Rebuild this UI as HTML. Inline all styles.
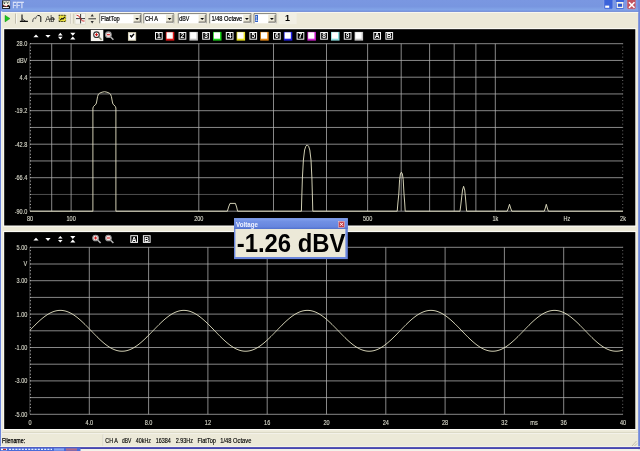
<!DOCTYPE html>
<html><head><meta charset="utf-8"><title>FFT</title>
<style>html,body{margin:0;padding:0;background:#ece9d8;overflow:hidden}svg{display:block;will-change:transform}</style></head>
<body>
<svg width="640" height="451" viewBox="0 0 640 451" font-family="Liberation Sans, sans-serif" shape-rendering="auto">
<rect x="0" y="0" width="640" height="451" fill="#ece9d8"/>
<defs><linearGradient id="tg" x1="0" y1="0" x2="0" y2="1"><stop offset="0" stop-color="#7a97e1"/><stop offset="0.55" stop-color="#7896e0"/><stop offset="0.85" stop-color="#83a6e8"/><stop offset="0.93" stop-color="#6f8fe0"/><stop offset="1" stop-color="#4f6ecc"/></linearGradient></defs>
<rect x="0" y="0" width="640" height="11.9" fill="url(#tg)"/>
<rect x="0" y="0" width="1.2" height="451" fill="#6f88dc"/>
<rect x="638.2" y="0" width="1.8" height="451" fill="#6f88dc"/>
<rect x="1.2" y="11.2" width="1" height="437" fill="#f6f5ee"/>
<rect x="2.1" y="0.4" width="8" height="8.4" fill="#0c0c0c"/>
<rect x="2.9" y="0.8" width="7" height="5.2" fill="#f2f0e4"/>
<path d="M3.6 1.4 L4.4 4 L5.2 1.6 M6.6 1.4 L7.6 3.6 L8.6 1.6" stroke="#3a4a40" stroke-width="0.8" fill="none"/>
<path d="M2.9 4.6 L4 5.6 L5.4 6.2 L6.6 6.3 L7.6 5.4 L8.4 4.8 L9.9 6 L9.9 6.6 L2.9 6.6 Z" fill="#141414"/>
<circle cx="3.6" cy="5.3" r="0.5" fill="#d02828"/><circle cx="5" cy="6" r="0.5" fill="#d02828"/><circle cx="6.5" cy="6.5" r="0.5" fill="#d02828"/><circle cx="7.6" cy="5.5" r="0.5" fill="#d02828"/>
<rect x="2.9" y="6.9" width="6" height="1.1" fill="#f4f4f0"/>
<text x="12.6" y="8" font-size="8.4" fill="#dfe6f9" text-anchor="start" font-weight="normal" textLength="11.3" lengthAdjust="spacingAndGlyphs" stroke="#dfe6f9" stroke-width="0.35">FFT</text>
<rect x="603.9" y="-1" width="9" height="10.2" rx="1.3" fill="#3b63da" stroke="#9ab0ee" stroke-width="0.6"/>
<rect x="615.4" y="-1" width="9" height="10.2" rx="1.3" fill="#3b63da" stroke="#9ab0ee" stroke-width="0.6"/>
<rect x="626.9" y="-1" width="9" height="10.2" rx="1.3" fill="#c2525f" stroke="#9ab0ee" stroke-width="0.6"/>
<rect x="605.2" y="5.6" width="4" height="2.2" fill="#fff"/>
<rect x="617.3" y="2.6" width="5.4" height="4.8" fill="#2f56cc" stroke="#f4f4ea" stroke-width="1.2"/><rect x="616.7" y="2" width="6.6" height="1.6" fill="#f4f4ea"/>
<path d="M629 2.2 L634.5 7.7 M634.5 2.2 L629 7.7" stroke="#fff" stroke-width="1.6" fill="none"/>
<rect x="1.2" y="11.9" width="637" height="0.9" fill="#fbfaf4"/>
<path d="M5 15.3 L10 18.6 L5 21.9 Z" fill="#1fc41f" stroke="#0a8a0a" stroke-width="0.4"/>
<rect x="15.3" y="13.6" width="0.7" height="10" fill="#b0ad9c"/><rect x="16" y="13.6" width="0.6" height="10" fill="#fff"/>
<path d="M22 14.4 L22 21.4 M19.9 21.4 L27.9 21.4" stroke="#111" stroke-width="1.1" fill="none"/>
<path d="M22.5 18.4 Q23 20.6 25.4 20.9" stroke="#222" stroke-width="0.9" fill="none"/>
<path d="M32.7 22 L33 19.2 L34.6 18 L35.6 18.7 L36.3 16.6 L37.8 15.4" stroke="#555" stroke-width="1" fill="none" stroke-linejoin="round"/>
<path d="M37.8 15.4 L40 15.9 L40.8 16.8 L40.8 22" stroke="#111" stroke-width="1" fill="none" stroke-linejoin="round"/>
<text x="45.2" y="21.5" font-size="8.6" fill="#111" text-anchor="start" font-weight="normal" textLength="9.2" lengthAdjust="spacingAndGlyphs" >Ab</text>
<rect x="49.2" y="18.6" width="5.6" height="0.9" fill="#000"/>
<rect x="58.8" y="14.9" width="7.2" height="7" fill="#ece23c"/>
<path d="M58.8 15.3 L66 15.3 M58.8 21.5 L66 21.5" stroke="#222" stroke-width="0.9" stroke-dasharray="1.6 0.8" fill="none"/>
<path d="M59.2 15 L59.2 22 M65.7 15 L65.7 22" stroke="#333" stroke-width="0.6" stroke-dasharray="1.4 1" fill="none"/>
<path d="M60.3 20.2 L61.8 18.4 L63 19 L64.8 16.8" stroke="#111" stroke-width="1.1" fill="none"/>
<rect x="70" y="13.6" width="0.7" height="10" fill="#b0ad9c"/><rect x="70.7" y="13.6" width="0.6" height="10" fill="#fff"/>
<rect x="73" y="13.6" width="0.7" height="10" fill="#c8c5b4"/>
<rect x="75" y="13.3" width="10.5" height="10.8" fill="#f6f5ef" stroke="#d0cdbd" stroke-width="0.5"/>
<path d="M76 18.6 L85 18.6 M80.6 14 L80.6 23.4" stroke="#222" stroke-width="0.9" fill="none"/>
<path d="M76.5 15.2 Q79 15 80.6 18.6 T84.6 21" stroke="#d02020" stroke-width="0.9" fill="none"/>
<path d="M88.4 18.8 L96 18.8" stroke="#222" stroke-width="0.9"/><path d="M92.2 14 L90.6 16.4 L93.8 16.4 Z M92.2 23.5 L90.6 21.1 L93.8 21.1 Z" fill="#333"/>
<rect x="99.4" y="13.3" width="42.099999999999994" height="10.0" fill="#fff"/>
<path d="M99.7 23.3 L99.7 13.600000000000001 L141.5 13.600000000000001" fill="none" stroke="#5a5a52" stroke-width="0.75"/>
<path d="M141.3 13.9 L141.3 23.3" fill="none" stroke="#55554e" stroke-width="0.5"/>
<rect x="133.5" y="14.700000000000001" width="7.2" height="7.8" fill="#ece9d8"/>
<path d="M133.5 22.2 L140.5 22.2 L140.5 14.700000000000001" fill="none" stroke="#4a4a44" stroke-width="0.7"/>
<path d="M134.1 21.5 L139.8 21.5 L139.8 15.3" fill="none" stroke="#9a978a" stroke-width="0.5"/>
<path d="M135.2 17.9 L139.0 17.9 L137.1 20.0 Z" fill="#000"/>
<text x="101.0" y="20.5" font-size="6.7" fill="#000" text-anchor="start" font-weight="normal" textLength="18.8" lengthAdjust="spacingAndGlyphs" stroke="#000" stroke-width="0.2">FlatTop</text>
<rect x="143.5" y="13.3" width="30.5" height="10.0" fill="#fff"/>
<path d="M143.8 23.3 L143.8 13.600000000000001 L174 13.600000000000001" fill="none" stroke="#5a5a52" stroke-width="0.75"/>
<path d="M173.8 13.9 L173.8 23.3" fill="none" stroke="#55554e" stroke-width="0.5"/>
<rect x="166" y="14.700000000000001" width="7.2" height="7.8" fill="#ece9d8"/>
<path d="M166 22.2 L173 22.2 L173 14.700000000000001" fill="none" stroke="#4a4a44" stroke-width="0.7"/>
<path d="M166.6 21.5 L172.3 21.5 L172.3 15.3" fill="none" stroke="#9a978a" stroke-width="0.5"/>
<path d="M167.7 17.9 L171.5 17.9 L169.6 20.0 Z" fill="#000"/>
<text x="145.1" y="20.5" font-size="6.7" fill="#000" text-anchor="start" font-weight="normal" textLength="12.9" lengthAdjust="spacingAndGlyphs" stroke="#000" stroke-width="0.2">CH A</text>
<rect x="178" y="13.3" width="28.599999999999994" height="10.0" fill="#fff"/>
<path d="M178.3 23.3 L178.3 13.600000000000001 L206.6 13.600000000000001" fill="none" stroke="#5a5a52" stroke-width="0.75"/>
<path d="M206.4 13.9 L206.4 23.3" fill="none" stroke="#55554e" stroke-width="0.5"/>
<rect x="198.6" y="14.700000000000001" width="7.2" height="7.8" fill="#ece9d8"/>
<path d="M198.6 22.2 L205.6 22.2 L205.6 14.700000000000001" fill="none" stroke="#4a4a44" stroke-width="0.7"/>
<path d="M199.2 21.5 L204.9 21.5 L204.9 15.3" fill="none" stroke="#9a978a" stroke-width="0.5"/>
<path d="M200.29999999999998 17.9 L204.1 17.9 L202.2 20.0 Z" fill="#000"/>
<text x="179.3" y="20.5" font-size="6.7" fill="#000" text-anchor="start" font-weight="normal" textLength="10" lengthAdjust="spacingAndGlyphs" stroke="#000" stroke-width="0.2">dBV</text>
<rect x="209.4" y="13.3" width="41.900000000000006" height="10.0" fill="#fff"/>
<path d="M209.70000000000002 23.3 L209.70000000000002 13.600000000000001 L251.3 13.600000000000001" fill="none" stroke="#5a5a52" stroke-width="0.75"/>
<path d="M251.10000000000002 13.9 L251.10000000000002 23.3" fill="none" stroke="#55554e" stroke-width="0.5"/>
<rect x="243.3" y="14.700000000000001" width="7.2" height="7.8" fill="#ece9d8"/>
<path d="M243.3 22.2 L250.3 22.2 L250.3 14.700000000000001" fill="none" stroke="#4a4a44" stroke-width="0.7"/>
<path d="M243.9 21.5 L249.60000000000002 21.5 L249.60000000000002 15.3" fill="none" stroke="#9a978a" stroke-width="0.5"/>
<path d="M245.0 17.9 L248.8 17.9 L246.9 20.0 Z" fill="#000"/>
<text x="211.4" y="20.5" font-size="6.7" fill="#000" text-anchor="start" font-weight="normal" textLength="30.8" lengthAdjust="spacingAndGlyphs" stroke="#000" stroke-width="0.2">1/48 Octave</text>
<rect x="253.7" y="13.3" width="22.600000000000023" height="10.0" fill="#fff"/>
<path d="M254.0 23.3 L254.0 13.600000000000001 L276.3 13.600000000000001" fill="none" stroke="#5a5a52" stroke-width="0.75"/>
<path d="M276.1 13.9 L276.1 23.3" fill="none" stroke="#55554e" stroke-width="0.5"/>
<rect x="268.3" y="14.700000000000001" width="7.2" height="7.8" fill="#ece9d8"/>
<path d="M268.3 22.2 L275.3 22.2 L275.3 14.700000000000001" fill="none" stroke="#4a4a44" stroke-width="0.7"/>
<path d="M268.90000000000003 21.5 L274.6 21.5 L274.6 15.3" fill="none" stroke="#9a978a" stroke-width="0.5"/>
<path d="M270.0 17.9 L273.8 17.9 L271.90000000000003 20.0 Z" fill="#000"/>
<rect x="255.1" y="14.9" width="2.9" height="7.1" fill="#2f62c8"/>
<text x="255.2" y="20.6" font-size="7" fill="#fff" text-anchor="start" font-weight="normal" textLength="2.6" lengthAdjust="spacingAndGlyphs" >1</text>
<rect x="278.6" y="12.6" width="18" height="11.6" fill="#f1efe4"/>
<text x="287.4" y="20.9" font-size="9" fill="#000" text-anchor="middle" font-weight="bold" >1</text>
<rect x="3.2" y="28.2" width="633.2" height="198.4" fill="#fdfdf8"/>
<rect x="4.2" y="29.2" width="631.1" height="196.3" fill="#000"/>
<rect x="3.2" y="231.1" width="633.2" height="199.0" fill="#fdfdf8"/>
<rect x="4.2" y="232.1" width="631.1" height="196.9" fill="#000"/>
<line x1="30" y1="43.70" x2="623" y2="43.70" stroke="#b4b4b4" stroke-width="0.75"/>
<line x1="30" y1="60.45" x2="623" y2="60.45" stroke="#b4b4b4" stroke-width="0.75"/>
<line x1="30" y1="77.20" x2="623" y2="77.20" stroke="#b4b4b4" stroke-width="0.75"/>
<line x1="30" y1="93.95" x2="623" y2="93.95" stroke="#b4b4b4" stroke-width="0.75"/>
<line x1="30" y1="110.70" x2="623" y2="110.70" stroke="#b4b4b4" stroke-width="0.75"/>
<line x1="30" y1="127.45" x2="623" y2="127.45" stroke="#b4b4b4" stroke-width="0.75"/>
<line x1="30" y1="144.20" x2="623" y2="144.20" stroke="#b4b4b4" stroke-width="0.75"/>
<line x1="30" y1="160.95" x2="623" y2="160.95" stroke="#b4b4b4" stroke-width="0.75"/>
<line x1="30" y1="177.70" x2="623" y2="177.70" stroke="#b4b4b4" stroke-width="0.75"/>
<line x1="30" y1="194.45" x2="623" y2="194.45" stroke="#6a6a6a" stroke-width="0.75"/>
<line x1="30" y1="211.20" x2="623" y2="211.20" stroke="#b4b4b4" stroke-width="0.75"/>
<line x1="51.70" y1="43.7" x2="51.70" y2="211.2" stroke="#b4b4b4" stroke-width="0.75"/>
<line x1="71.11" y1="43.7" x2="71.11" y2="211.2" stroke="#b4b4b4" stroke-width="0.75"/>
<line x1="198.80" y1="43.7" x2="198.80" y2="211.2" stroke="#b4b4b4" stroke-width="0.75"/>
<line x1="273.50" y1="43.7" x2="273.50" y2="211.2" stroke="#b4b4b4" stroke-width="0.75"/>
<line x1="326.50" y1="43.7" x2="326.50" y2="211.2" stroke="#b4b4b4" stroke-width="0.75"/>
<line x1="367.61" y1="43.7" x2="367.61" y2="211.2" stroke="#b4b4b4" stroke-width="0.75"/>
<line x1="401.20" y1="43.7" x2="401.20" y2="211.2" stroke="#b4b4b4" stroke-width="0.75"/>
<line x1="429.60" y1="43.7" x2="429.60" y2="211.2" stroke="#b4b4b4" stroke-width="0.75"/>
<line x1="454.20" y1="43.7" x2="454.20" y2="211.2" stroke="#b4b4b4" stroke-width="0.75"/>
<line x1="475.89" y1="43.7" x2="475.89" y2="211.2" stroke="#b4b4b4" stroke-width="0.75"/>
<line x1="495.30" y1="43.7" x2="495.30" y2="211.2" stroke="#b4b4b4" stroke-width="0.75"/>
<line x1="29.8" y1="43.7" x2="29.8" y2="211.2" stroke="#5a5a5a" stroke-width="0.7"/>
<line x1="30.4" y1="43.25" x2="30.4" y2="211.2" stroke="#c8c8c8" stroke-width="1" stroke-dasharray="0.9 2.450"/>
<line x1="622.7" y1="43.25" x2="622.7" y2="211.2" stroke="#707070" stroke-width="1" stroke-dasharray="0.9 2.450"/>
<line x1="30" y1="247.30" x2="623" y2="247.30" stroke="#b4b4b4" stroke-width="0.75"/>
<line x1="30" y1="264.00" x2="623" y2="264.00" stroke="#b4b4b4" stroke-width="0.75"/>
<line x1="30" y1="280.70" x2="623" y2="280.70" stroke="#b4b4b4" stroke-width="0.75"/>
<line x1="30" y1="297.40" x2="623" y2="297.40" stroke="#b4b4b4" stroke-width="0.75"/>
<line x1="30" y1="314.10" x2="623" y2="314.10" stroke="#b4b4b4" stroke-width="0.75"/>
<line x1="30" y1="330.80" x2="623" y2="330.80" stroke="#b4b4b4" stroke-width="0.75"/>
<line x1="30" y1="347.50" x2="623" y2="347.50" stroke="#b4b4b4" stroke-width="0.75"/>
<line x1="30" y1="364.20" x2="623" y2="364.20" stroke="#b4b4b4" stroke-width="0.75"/>
<line x1="30" y1="380.90" x2="623" y2="380.90" stroke="#b4b4b4" stroke-width="0.75"/>
<line x1="30" y1="397.60" x2="623" y2="397.60" stroke="#b4b4b4" stroke-width="0.75"/>
<line x1="30" y1="414.30" x2="623" y2="414.30" stroke="#b4b4b4" stroke-width="0.75"/>
<line x1="89.30" y1="247.3" x2="89.30" y2="414.3" stroke="#b4b4b4" stroke-width="0.75"/>
<line x1="148.60" y1="247.3" x2="148.60" y2="414.3" stroke="#b4b4b4" stroke-width="0.75"/>
<line x1="207.90" y1="247.3" x2="207.90" y2="414.3" stroke="#b4b4b4" stroke-width="0.75"/>
<line x1="267.20" y1="247.3" x2="267.20" y2="414.3" stroke="#b4b4b4" stroke-width="0.75"/>
<line x1="326.50" y1="247.3" x2="326.50" y2="414.3" stroke="#b4b4b4" stroke-width="0.75"/>
<line x1="385.80" y1="247.3" x2="385.80" y2="414.3" stroke="#b4b4b4" stroke-width="0.75"/>
<line x1="445.10" y1="247.3" x2="445.10" y2="414.3" stroke="#b4b4b4" stroke-width="0.75"/>
<line x1="504.40" y1="247.3" x2="504.40" y2="414.3" stroke="#b4b4b4" stroke-width="0.75"/>
<line x1="563.70" y1="247.3" x2="563.70" y2="414.3" stroke="#b4b4b4" stroke-width="0.75"/>
<line x1="29.8" y1="247.3" x2="29.8" y2="414.3" stroke="#5a5a5a" stroke-width="0.7"/>
<line x1="30.4" y1="246.85000000000002" x2="30.4" y2="414.3" stroke="#c8c8c8" stroke-width="1" stroke-dasharray="0.9 2.440"/>
<line x1="622.7" y1="246.85000000000002" x2="622.7" y2="414.3" stroke="#707070" stroke-width="1" stroke-dasharray="0.9 2.440"/>
<text x="16.54" y="46.1" font-size="7" fill="#d6d6c8" text-anchor="start" font-weight="normal" textLength="10.76" lengthAdjust="spacingAndGlyphs" stroke="#d6d6c8" stroke-width="0.15">28.0</text>
<text x="16.85" y="62.85" font-size="7" fill="#d6d6c8" text-anchor="start" font-weight="normal" textLength="10.45" lengthAdjust="spacingAndGlyphs" stroke="#d6d6c8" stroke-width="0.15">dBV</text>
<text x="19.61" y="79.6" font-size="7" fill="#d6d6c8" text-anchor="start" font-weight="normal" textLength="7.69" lengthAdjust="spacingAndGlyphs" stroke="#d6d6c8" stroke-width="0.15">4.4</text>
<text x="14.7" y="113.1" font-size="7" fill="#d6d6c8" text-anchor="start" font-weight="normal" textLength="12.6" lengthAdjust="spacingAndGlyphs" stroke="#d6d6c8" stroke-width="0.15">-19.2</text>
<text x="14.7" y="146.6" font-size="7" fill="#d6d6c8" text-anchor="start" font-weight="normal" textLength="12.6" lengthAdjust="spacingAndGlyphs" stroke="#d6d6c8" stroke-width="0.15">-42.8</text>
<text x="14.7" y="180.1" font-size="7" fill="#d6d6c8" text-anchor="start" font-weight="normal" textLength="12.6" lengthAdjust="spacingAndGlyphs" stroke="#d6d6c8" stroke-width="0.15">-66.4</text>
<text x="14.7" y="213.6" font-size="7" fill="#d6d6c8" text-anchor="start" font-weight="normal" textLength="12.6" lengthAdjust="spacingAndGlyphs" stroke="#d6d6c8" stroke-width="0.15">-90.0</text>
<text x="16.54" y="249.7" font-size="7" fill="#d6d6c8" text-anchor="start" font-weight="normal" textLength="10.76" lengthAdjust="spacingAndGlyphs" stroke="#d6d6c8" stroke-width="0.15">5.00</text>
<text x="23.61" y="266.4" font-size="7" fill="#d6d6c8" text-anchor="start" font-weight="normal" textLength="3.69" lengthAdjust="spacingAndGlyphs" stroke="#d6d6c8" stroke-width="0.15">V</text>
<text x="16.54" y="283.1" font-size="7" fill="#d6d6c8" text-anchor="start" font-weight="normal" textLength="10.76" lengthAdjust="spacingAndGlyphs" stroke="#d6d6c8" stroke-width="0.15">3.00</text>
<text x="16.54" y="316.5" font-size="7" fill="#d6d6c8" text-anchor="start" font-weight="normal" textLength="10.76" lengthAdjust="spacingAndGlyphs" stroke="#d6d6c8" stroke-width="0.15">1.00</text>
<text x="14.7" y="349.9" font-size="7" fill="#d6d6c8" text-anchor="start" font-weight="normal" textLength="12.6" lengthAdjust="spacingAndGlyphs" stroke="#d6d6c8" stroke-width="0.15">-1.00</text>
<text x="14.7" y="383.3" font-size="7" fill="#d6d6c8" text-anchor="start" font-weight="normal" textLength="12.6" lengthAdjust="spacingAndGlyphs" stroke="#d6d6c8" stroke-width="0.15">-3.00</text>
<text x="14.7" y="416.7" font-size="7" fill="#d6d6c8" text-anchor="start" font-weight="normal" textLength="12.6" lengthAdjust="spacingAndGlyphs" stroke="#d6d6c8" stroke-width="0.15">-5.00</text>
<text x="26.93" y="221.2" font-size="7" fill="#d6d6c8" text-anchor="start" font-weight="normal" textLength="6.15" lengthAdjust="spacingAndGlyphs" stroke="#d6d6c8" stroke-width="0.15">80</text>
<text x="66.49" y="221.2" font-size="7" fill="#d6d6c8" text-anchor="start" font-weight="normal" textLength="9.23" lengthAdjust="spacingAndGlyphs" stroke="#d6d6c8" stroke-width="0.15">100</text>
<text x="194.19" y="221.2" font-size="7" fill="#d6d6c8" text-anchor="start" font-weight="normal" textLength="9.23" lengthAdjust="spacingAndGlyphs" stroke="#d6d6c8" stroke-width="0.15">200</text>
<text x="362.99" y="221.2" font-size="7" fill="#d6d6c8" text-anchor="start" font-weight="normal" textLength="9.23" lengthAdjust="spacingAndGlyphs" stroke="#d6d6c8" stroke-width="0.15">500</text>
<text x="492.38" y="221.2" font-size="7" fill="#d6d6c8" text-anchor="start" font-weight="normal" textLength="5.84" lengthAdjust="spacingAndGlyphs" stroke="#d6d6c8" stroke-width="0.15">1k</text>
<text x="563.62" y="221.2" font-size="7" fill="#d6d6c8" text-anchor="start" font-weight="normal" textLength="6.76" lengthAdjust="spacingAndGlyphs" stroke="#d6d6c8" stroke-width="0.15">Hz</text>
<text x="620.08" y="221.2" font-size="7" fill="#d6d6c8" text-anchor="start" font-weight="normal" textLength="5.84" lengthAdjust="spacingAndGlyphs" stroke="#d6d6c8" stroke-width="0.15">2k</text>
<text x="28.46" y="424.7" font-size="7" fill="#d6d6c8" text-anchor="start" font-weight="normal" textLength="3.08" lengthAdjust="spacingAndGlyphs" stroke="#d6d6c8" stroke-width="0.15">0</text>
<text x="85.45" y="424.7" font-size="7" fill="#d6d6c8" text-anchor="start" font-weight="normal" textLength="7.69" lengthAdjust="spacingAndGlyphs" stroke="#d6d6c8" stroke-width="0.15">4.0</text>
<text x="144.75" y="424.7" font-size="7" fill="#d6d6c8" text-anchor="start" font-weight="normal" textLength="7.69" lengthAdjust="spacingAndGlyphs" stroke="#d6d6c8" stroke-width="0.15">8.0</text>
<text x="204.83" y="424.7" font-size="7" fill="#d6d6c8" text-anchor="start" font-weight="normal" textLength="6.15" lengthAdjust="spacingAndGlyphs" stroke="#d6d6c8" stroke-width="0.15">12</text>
<text x="264.12" y="424.7" font-size="7" fill="#d6d6c8" text-anchor="start" font-weight="normal" textLength="6.15" lengthAdjust="spacingAndGlyphs" stroke="#d6d6c8" stroke-width="0.15">16</text>
<text x="323.43" y="424.7" font-size="7" fill="#d6d6c8" text-anchor="start" font-weight="normal" textLength="6.15" lengthAdjust="spacingAndGlyphs" stroke="#d6d6c8" stroke-width="0.15">20</text>
<text x="382.73" y="424.7" font-size="7" fill="#d6d6c8" text-anchor="start" font-weight="normal" textLength="6.15" lengthAdjust="spacingAndGlyphs" stroke="#d6d6c8" stroke-width="0.15">24</text>
<text x="442.03" y="424.7" font-size="7" fill="#d6d6c8" text-anchor="start" font-weight="normal" textLength="6.15" lengthAdjust="spacingAndGlyphs" stroke="#d6d6c8" stroke-width="0.15">28</text>
<text x="501.32" y="424.7" font-size="7" fill="#d6d6c8" text-anchor="start" font-weight="normal" textLength="6.15" lengthAdjust="spacingAndGlyphs" stroke="#d6d6c8" stroke-width="0.15">32</text>
<text x="560.62" y="424.7" font-size="7" fill="#d6d6c8" text-anchor="start" font-weight="normal" textLength="6.15" lengthAdjust="spacingAndGlyphs" stroke="#d6d6c8" stroke-width="0.15">36</text>
<text x="619.92" y="424.7" font-size="7" fill="#d6d6c8" text-anchor="start" font-weight="normal" textLength="6.15" lengthAdjust="spacingAndGlyphs" stroke="#d6d6c8" stroke-width="0.15">40</text>
<text x="530.32" y="424.7" font-size="7" fill="#d6d6c8" text-anchor="start" font-weight="normal" textLength="7.37" lengthAdjust="spacingAndGlyphs" stroke="#d6d6c8" stroke-width="0.15">ms</text>
<path d="M30.00 211.20 L92.90 211.20 L92.90 108.00 L93.60 106.40 L95.20 104.80 L96.00 104.20 L96.60 102.00 L97.60 96.50 L98.40 94.20 L99.80 93.10 L102.00 92.20 L104.50 91.70 L107.00 92.20 L109.20 93.10 L110.50 94.20 L111.40 96.50 L112.40 102.00 L113.00 104.20 L113.80 104.80 L115.30 106.40 L115.90 108.00 L115.90 211.20 L227.40 211.20 L228.60 207.00 L230.00 203.40 L235.40 203.40 L236.60 207.00 L237.60 211.20 L301.40 211.20 L301.70 200.00 L302.40 178.00 L303.40 160.00 L304.60 150.00 L305.80 146.30 L307.20 144.90 L308.60 146.30 L309.80 150.00 L311.00 160.00 L311.90 178.00 L312.50 200.00 L312.80 211.20 L397.20 211.20 L397.90 203.00 L398.80 194.00 L399.60 179.50 L400.40 174.00 L401.40 172.20 L402.40 174.00 L403.20 179.50 L404.00 194.00 L404.70 203.00 L405.20 211.20 L460.00 211.20 L460.80 205.00 L461.60 198.00 L462.50 190.00 L463.60 186.30 L464.70 190.00 L465.50 198.00 L466.10 205.00 L466.60 211.20 L507.20 211.20 L508.40 208.00 L509.50 204.30 L510.60 208.00 L511.80 211.20 L544.30 211.20 L545.30 208.00 L546.30 204.30 L547.30 208.00 L548.40 211.20 L623.00 211.20" fill="none" stroke="#e6e4c6" stroke-width="0.9" stroke-linejoin="round"/>
<path d="M30.00 330.19 L31.00 329.15 L32.00 328.12 L33.00 327.09 L34.00 326.08 L35.00 325.07 L36.00 324.08 L37.00 323.11 L38.00 322.16 L39.00 321.23 L40.00 320.32 L41.00 319.45 L42.00 318.60 L43.00 317.78 L44.00 317.00 L45.00 316.25 L46.00 315.54 L47.00 314.87 L48.00 314.24 L49.00 313.65 L50.00 313.11 L51.00 312.62 L52.00 312.17 L53.00 311.77 L54.00 311.41 L55.00 311.11 L56.00 310.86 L57.00 310.66 L58.00 310.51 L59.00 310.42 L60.00 310.38 L61.00 310.39 L62.00 310.45 L63.00 310.57 L64.00 310.74 L65.00 310.96 L66.00 311.23 L67.00 311.55 L68.00 311.92 L69.00 312.34 L70.00 312.81 L71.00 313.33 L72.00 313.89 L73.00 314.49 L74.00 315.14 L75.00 315.83 L76.00 316.55 L77.00 317.31 L78.00 318.11 L79.00 318.94 L80.00 319.80 L81.00 320.69 L82.00 321.61 L83.00 322.55 L84.00 323.51 L85.00 324.48 L86.00 325.48 L87.00 326.49 L88.00 327.51 L89.00 328.54 L90.00 329.57 L91.00 330.61 L92.00 331.65 L93.00 332.69 L94.00 333.72 L95.00 334.74 L96.00 335.76 L97.00 336.76 L98.00 337.74 L99.00 338.71 L100.00 339.66 L101.00 340.58 L102.00 341.48 L103.00 342.35 L104.00 343.19 L105.00 344.00 L106.00 344.78 L107.00 345.52 L108.00 346.22 L109.00 346.88 L110.00 347.50 L111.00 348.07 L112.00 348.61 L113.00 349.09 L114.00 349.53 L115.00 349.92 L116.00 350.26 L117.00 350.55 L118.00 350.79 L119.00 350.98 L120.00 351.11 L121.00 351.19 L122.00 351.22 L123.00 351.20 L124.00 351.13 L125.00 351.00 L126.00 350.82 L127.00 350.58 L128.00 350.30 L129.00 349.97 L130.00 349.58 L131.00 349.15 L132.00 348.67 L133.00 348.15 L134.00 347.58 L135.00 346.96 L136.00 346.31 L137.00 345.61 L138.00 344.88 L139.00 344.11 L140.00 343.30 L141.00 342.46 L142.00 341.60 L143.00 340.70 L144.00 339.78 L145.00 338.84 L146.00 337.87 L147.00 336.89 L148.00 335.89 L149.00 334.88 L150.00 333.85 L151.00 332.82 L152.00 331.79 L153.00 330.75 L154.00 329.71 L155.00 328.68 L156.00 327.65 L157.00 326.62 L158.00 325.61 L159.00 324.62 L160.00 323.63 L161.00 322.67 L162.00 321.73 L163.00 320.81 L164.00 319.92 L165.00 319.05 L166.00 318.22 L167.00 317.42 L168.00 316.65 L169.00 315.92 L170.00 315.23 L171.00 314.58 L172.00 313.97 L173.00 313.40 L174.00 312.88 L175.00 312.40 L176.00 311.98 L177.00 311.60 L178.00 311.27 L179.00 310.99 L180.00 310.76 L181.00 310.59 L182.00 310.46 L183.00 310.39 L184.00 310.38 L185.00 310.41 L186.00 310.50 L187.00 310.64 L188.00 310.83 L189.00 311.08 L190.00 311.37 L191.00 311.72 L192.00 312.11 L193.00 312.55 L194.00 313.04 L195.00 313.58 L196.00 314.16 L197.00 314.78 L198.00 315.45 L199.00 316.15 L200.00 316.90 L201.00 317.67 L202.00 318.49 L203.00 319.33 L204.00 320.21 L205.00 321.11 L206.00 322.03 L207.00 322.98 L208.00 323.95 L209.00 324.94 L210.00 325.94 L211.00 326.96 L212.00 327.98 L213.00 329.01 L214.00 330.05 L215.00 331.09 L216.00 332.13 L217.00 333.16 L218.00 334.19 L219.00 335.21 L220.00 336.22 L221.00 337.21 L222.00 338.19 L223.00 339.15 L224.00 340.08 L225.00 341.00 L226.00 341.88 L227.00 342.74 L228.00 343.57 L229.00 344.36 L230.00 345.12 L231.00 345.84 L232.00 346.52 L233.00 347.17 L234.00 347.77 L235.00 348.32 L236.00 348.83 L237.00 349.30 L238.00 349.71 L239.00 350.08 L240.00 350.40 L241.00 350.67 L242.00 350.88 L243.00 351.04 L244.00 351.16 L245.00 351.21 L246.00 351.22 L247.00 351.17 L248.00 351.07 L249.00 350.92 L250.00 350.72 L251.00 350.46 L252.00 350.15 L253.00 349.80 L254.00 349.39 L255.00 348.94 L256.00 348.44 L257.00 347.89 L258.00 347.30 L259.00 346.67 L260.00 345.99 L261.00 345.28 L262.00 344.53 L263.00 343.74 L264.00 342.92 L265.00 342.07 L266.00 341.19 L267.00 340.28 L268.00 339.35 L269.00 338.40 L270.00 337.42 L271.00 336.43 L272.00 335.43 L273.00 334.41 L274.00 333.38 L275.00 332.35 L276.00 331.31 L277.00 330.27 L278.00 329.24 L279.00 328.20 L280.00 327.18 L281.00 326.16 L282.00 325.15 L283.00 324.16 L284.00 323.19 L285.00 322.24 L286.00 321.31 L287.00 320.40 L288.00 319.52 L289.00 318.67 L290.00 317.85 L291.00 317.06 L292.00 316.31 L293.00 315.60 L294.00 314.92 L295.00 314.29 L296.00 313.70 L297.00 313.16 L298.00 312.66 L299.00 312.20 L300.00 311.80 L301.00 311.44 L302.00 311.14 L303.00 310.88 L304.00 310.68 L305.00 310.53 L306.00 310.43 L307.00 310.38 L308.00 310.39 L309.00 310.45 L310.00 310.56 L311.00 310.72 L312.00 310.94 L313.00 311.20 L314.00 311.52 L315.00 311.89 L316.00 312.31 L317.00 312.77 L318.00 313.28 L319.00 313.84 L320.00 314.44 L321.00 315.08 L322.00 315.77 L323.00 316.49 L324.00 317.25 L325.00 318.04 L326.00 318.87 L327.00 319.73 L328.00 320.62 L329.00 321.53 L330.00 322.47 L331.00 323.42 L332.00 324.40 L333.00 325.40 L334.00 326.41 L335.00 327.42 L336.00 328.45 L337.00 329.49 L338.00 330.53 L339.00 331.56 L340.00 332.60 L341.00 333.63 L342.00 334.66 L343.00 335.67 L344.00 336.67 L345.00 337.66 L346.00 338.63 L347.00 339.58 L348.00 340.50 L349.00 341.41 L350.00 342.28 L351.00 343.12 L352.00 343.94 L353.00 344.71 L354.00 345.46 L355.00 346.16 L356.00 346.82 L357.00 347.45 L358.00 348.03 L359.00 348.56 L360.00 349.05 L361.00 349.49 L362.00 349.89 L363.00 350.23 L364.00 350.53 L365.00 350.77 L366.00 350.96 L367.00 351.10 L368.00 351.19 L369.00 351.22 L370.00 351.21 L371.00 351.13 L372.00 351.01 L373.00 350.83 L374.00 350.61 L375.00 350.33 L376.00 350.00 L377.00 349.62 L378.00 349.19 L379.00 348.71 L380.00 348.19 L381.00 347.63 L382.00 347.02 L383.00 346.36 L384.00 345.67 L385.00 344.94 L386.00 344.17 L387.00 343.37 L388.00 342.54 L389.00 341.67 L390.00 340.78 L391.00 339.86 L392.00 338.92 L393.00 337.95 L394.00 336.97 L395.00 335.97 L396.00 334.96 L397.00 333.94 L398.00 332.91 L399.00 331.87 L400.00 330.84 L401.00 329.80 L402.00 328.76 L403.00 327.73 L404.00 326.71 L405.00 325.70 L406.00 324.70 L407.00 323.72 L408.00 322.75 L409.00 321.81 L410.00 320.89 L411.00 319.99 L412.00 319.12 L413.00 318.29 L414.00 317.48 L415.00 316.71 L416.00 315.98 L417.00 315.28 L418.00 314.63 L419.00 314.02 L420.00 313.45 L421.00 312.92 L422.00 312.44 L423.00 312.01 L424.00 311.63 L425.00 311.29 L426.00 311.01 L427.00 310.78 L428.00 310.60 L429.00 310.47 L430.00 310.40 L431.00 310.38 L432.00 310.41 L433.00 310.49 L434.00 310.63 L435.00 310.81 L436.00 311.05 L437.00 311.34 L438.00 311.69 L439.00 312.08 L440.00 312.52 L441.00 313.00 L442.00 313.53 L443.00 314.11 L444.00 314.73 L445.00 315.39 L446.00 316.09 L447.00 316.83 L448.00 317.61 L449.00 318.42 L450.00 319.26 L451.00 320.13 L452.00 321.03 L453.00 321.96 L454.00 322.90 L455.00 323.87 L456.00 324.86 L457.00 325.86 L458.00 326.87 L459.00 327.90 L460.00 328.93 L461.00 329.96 L462.00 331.00 L463.00 332.04 L464.00 333.07 L465.00 334.10 L466.00 335.12 L467.00 336.13 L468.00 337.13 L469.00 338.11 L470.00 339.07 L471.00 340.01 L472.00 340.92 L473.00 341.81 L474.00 342.67 L475.00 343.50 L476.00 344.30 L477.00 345.06 L478.00 345.78 L479.00 346.47 L480.00 347.12 L481.00 347.72 L482.00 348.28 L483.00 348.79 L484.00 349.26 L485.00 349.68 L486.00 350.05 L487.00 350.37 L488.00 350.65 L489.00 350.87 L490.00 351.03 L491.00 351.15 L492.00 351.21 L493.00 351.22 L494.00 351.18 L495.00 351.08 L496.00 350.94 L497.00 350.74 L498.00 350.48 L499.00 350.18 L500.00 349.83 L501.00 349.43 L502.00 348.98 L503.00 348.48 L504.00 347.94 L505.00 347.35 L506.00 346.72 L507.00 346.05 L508.00 345.34 L509.00 344.59 L510.00 343.81 L511.00 342.99 L512.00 342.14 L513.00 341.26 L514.00 340.36 L515.00 339.43 L516.00 338.48 L517.00 337.50 L518.00 336.52 L519.00 335.51 L520.00 334.49 L521.00 333.47 L522.00 332.44 L523.00 331.40 L524.00 330.36 L525.00 329.32 L526.00 328.29 L527.00 327.26 L528.00 326.24 L529.00 325.24 L530.00 324.25 L531.00 323.27 L532.00 322.32 L533.00 321.38 L534.00 320.47 L535.00 319.59 L536.00 318.74 L537.00 317.91 L538.00 317.13 L539.00 316.37 L540.00 315.66 L541.00 314.98 L542.00 314.34 L543.00 313.75 L544.00 313.20 L545.00 312.70 L546.00 312.24 L547.00 311.83 L548.00 311.47 L549.00 311.16 L550.00 310.90 L551.00 310.69 L552.00 310.54 L553.00 310.43 L554.00 310.38 L555.00 310.38 L556.00 310.44 L557.00 310.55 L558.00 310.71 L559.00 310.92 L560.00 311.18 L561.00 311.49 L562.00 311.86 L563.00 312.27 L564.00 312.73 L565.00 313.24 L566.00 313.79 L567.00 314.39 L568.00 315.03 L569.00 315.71 L570.00 316.43 L571.00 317.18 L572.00 317.98 L573.00 318.80 L574.00 319.66 L575.00 320.54 L576.00 321.45 L577.00 322.39 L578.00 323.34 L579.00 324.32 L580.00 325.31 L581.00 326.32 L582.00 327.34 L583.00 328.37 L584.00 329.40 L585.00 330.44 L586.00 331.48 L587.00 332.51 L588.00 333.55 L589.00 334.57 L590.00 335.59 L591.00 336.59 L592.00 337.58 L593.00 338.55 L594.00 339.50 L595.00 340.43 L596.00 341.33 L597.00 342.21 L598.00 343.05 L599.00 343.87 L600.00 344.65 L601.00 345.40 L602.00 346.10 L603.00 346.77 L604.00 347.40 L605.00 347.98 L606.00 348.52 L607.00 349.01 L608.00 349.46 L609.00 349.86 L610.00 350.21 L611.00 350.50 L612.00 350.75 L613.00 350.95 L614.00 351.09 L615.00 351.18 L616.00 351.22 L617.00 351.21 L618.00 351.14 L619.00 351.02 L620.00 350.85 L621.00 350.63 L622.00 350.35 L623.00 350.03" fill="none" stroke="#e6e4c6" stroke-width="0.9"/>
<path d="M33.4 37.3 L38.6 37.3 L36 34.5 Z" fill="#fff"/>
<path d="M45.4 34.9 L50.6 34.9 L48 37.7 Z" fill="#fff"/>
<path d="M58.0 35.4 L62.599999999999994 35.4 L60.3 32.8 Z M58.0 36.8 L62.599999999999994 36.8 L60.3 39.4 Z" fill="#fff"/>
<path d="M70.2 32.8 L75.39999999999999 32.8 L72.8 35.8 Z M70.2 39.4 L75.39999999999999 39.4 L72.8 36.4 Z" fill="#fff"/>
<path d="M33.4 240.5 L38.6 240.5 L36 237.7 Z" fill="#fff"/>
<path d="M45.4 238.1 L50.6 238.1 L48 240.89999999999998 Z" fill="#fff"/>
<path d="M58.0 238.6 L62.599999999999994 238.6 L60.3 236.0 Z M58.0 240.0 L62.599999999999994 240.0 L60.3 242.6 Z" fill="#fff"/>
<path d="M70.2 236.0 L75.39999999999999 236.0 L72.8 239.0 Z M70.2 242.6 L75.39999999999999 242.6 L72.8 239.6 Z" fill="#fff"/>
<rect x="90.8" y="29.9" width="12.5" height="11.2" fill="#f6f5f0"/>
<path d="M98.5 36.7 L101.5 39.800000000000004" stroke="#8a8a70" stroke-width="1.5"/>
<circle cx="96.5" cy="34.7" r="2.8" fill="#fff" stroke="#303030" stroke-width="1.1"/>
<path d="M95.0 34.7 L98.0 34.7" stroke="#d01010" stroke-width="1"/>
<path d="M96.5 33.2 L96.5 36.2" stroke="#d01010" stroke-width="1"/>
<path d="M110.4 36.7 L113.4 39.800000000000004" stroke="#b4b4b4" stroke-width="1.5"/>
<circle cx="108.4" cy="34.7" r="2.8" fill="#f4e4e4" stroke="#9a9a9a" stroke-width="1.1"/>
<path d="M106.9 34.7 L109.9 34.7" stroke="#d01010" stroke-width="1"/>
<path d="M97.60000000000001 240.0 L100.60000000000001 243.1" stroke="#b4b4b4" stroke-width="1.5"/>
<circle cx="95.60000000000001" cy="238.0" r="2.8" fill="#f4e4e4" stroke="#9a9a9a" stroke-width="1.1"/>
<path d="M94.10000000000001 238.0 L97.10000000000001 238.0" stroke="#d01010" stroke-width="1"/>
<path d="M95.60000000000001 236.5 L95.60000000000001 239.5" stroke="#d01010" stroke-width="1"/>
<path d="M110.4 240.0 L113.4 243.1" stroke="#b4b4b4" stroke-width="1.5"/>
<circle cx="108.4" cy="238.0" r="2.8" fill="#f4e4e4" stroke="#9a9a9a" stroke-width="1.1"/>
<path d="M106.9 238.0 L109.9 238.0" stroke="#d01010" stroke-width="1"/>
<rect x="128.5" y="32.7" width="7.1" height="7.5" fill="#fff" stroke="#d6d2b8" stroke-width="1.1"/>
<path d="M130.2 35.2 L131.5 36.8 L134 33.9" stroke="#000" stroke-width="1.4" fill="none"/>
<rect x="155.50" y="32.50" width="6.7" height="6.7" fill="#000" stroke="#f4f4f4" stroke-width="1"/>
<text x="158.85" y="38.4" font-size="6.6" fill="#fff" text-anchor="middle" font-weight="bold" >1</text>
<rect x="165.80" y="31.9" width="8.5" height="8.7" fill="#e01818"/>
<rect x="166.60" y="32.3" width="6.2" height="6.4" fill="#fff"/>
<rect x="179.10" y="32.50" width="6.7" height="6.7" fill="#000" stroke="#f4f4f4" stroke-width="1"/>
<text x="182.45" y="38.4" font-size="6.6" fill="#fff" text-anchor="middle" font-weight="bold" >2</text>
<rect x="189.40" y="31.9" width="8.5" height="8.7" fill="#c4c4c4"/>
<rect x="190.20" y="32.3" width="6.2" height="6.4" fill="#fff"/>
<rect x="202.70" y="32.50" width="6.7" height="6.7" fill="#000" stroke="#f4f4f4" stroke-width="1"/>
<text x="206.05" y="38.4" font-size="6.6" fill="#fff" text-anchor="middle" font-weight="bold" >3</text>
<rect x="213.00" y="31.9" width="8.5" height="8.7" fill="#18d018"/>
<rect x="213.80" y="32.3" width="6.2" height="6.4" fill="#fff"/>
<rect x="226.30" y="32.50" width="6.7" height="6.7" fill="#000" stroke="#f4f4f4" stroke-width="1"/>
<text x="229.65" y="38.4" font-size="6.6" fill="#fff" text-anchor="middle" font-weight="bold" >4</text>
<rect x="236.60" y="31.9" width="8.5" height="8.7" fill="#e8e020"/>
<rect x="237.40" y="32.3" width="6.2" height="6.4" fill="#fff"/>
<rect x="249.90" y="32.50" width="6.7" height="6.7" fill="#000" stroke="#f4f4f4" stroke-width="1"/>
<text x="253.25" y="38.4" font-size="6.6" fill="#fff" text-anchor="middle" font-weight="bold" >5</text>
<rect x="260.20" y="31.9" width="8.5" height="8.7" fill="#e88a18"/>
<rect x="261.00" y="32.3" width="6.2" height="6.4" fill="#fff"/>
<rect x="273.50" y="32.50" width="6.7" height="6.7" fill="#000" stroke="#f4f4f4" stroke-width="1"/>
<text x="276.85" y="38.4" font-size="6.6" fill="#fff" text-anchor="middle" font-weight="bold" >6</text>
<rect x="283.80" y="31.9" width="8.5" height="8.7" fill="#2020e0"/>
<rect x="284.60" y="32.3" width="6.2" height="6.4" fill="#fff"/>
<rect x="297.10" y="32.50" width="6.7" height="6.7" fill="#000" stroke="#f4f4f4" stroke-width="1"/>
<text x="300.45" y="38.4" font-size="6.6" fill="#fff" text-anchor="middle" font-weight="bold" >7</text>
<rect x="307.40" y="31.9" width="8.5" height="8.7" fill="#d020d0"/>
<rect x="308.20" y="32.3" width="6.2" height="6.4" fill="#fff"/>
<rect x="320.70" y="32.50" width="6.7" height="6.7" fill="#000" stroke="#f4f4f4" stroke-width="1"/>
<text x="324.05" y="38.4" font-size="6.6" fill="#fff" text-anchor="middle" font-weight="bold" >8</text>
<rect x="331.00" y="31.9" width="8.5" height="8.7" fill="#8adede"/>
<rect x="331.80" y="32.3" width="6.2" height="6.4" fill="#fff"/>
<rect x="344.30" y="32.50" width="6.7" height="6.7" fill="#000" stroke="#f4f4f4" stroke-width="1"/>
<text x="347.65" y="38.4" font-size="6.6" fill="#fff" text-anchor="middle" font-weight="bold" >9</text>
<rect x="354.60" y="31.9" width="8.5" height="8.7" fill="#c4c4c4"/>
<rect x="355.40" y="32.3" width="6.2" height="6.4" fill="#fff"/>
<rect x="373.80" y="32.50" width="6.7" height="6.7" fill="#000" stroke="#f4f4f4" stroke-width="1"/>
<text x="377.15" y="38.4" font-size="6.6" fill="#fff" text-anchor="middle" font-weight="bold" >A</text>
<rect x="385.90" y="32.50" width="6.7" height="6.7" fill="#000" stroke="#f4f4f4" stroke-width="1"/>
<text x="389.25" y="38.4" font-size="6.6" fill="#fff" text-anchor="middle" font-weight="bold" >B</text>
<rect x="130.80" y="235.70" width="6.7" height="6.7" fill="#000" stroke="#f4f4f4" stroke-width="1"/>
<text x="134.15" y="241.6" font-size="6.6" fill="#fff" text-anchor="middle" font-weight="bold" >A</text>
<rect x="143.40" y="235.70" width="6.7" height="6.7" fill="#000" stroke="#f4f4f4" stroke-width="1"/>
<text x="146.75" y="241.6" font-size="6.6" fill="#fff" text-anchor="middle" font-weight="bold" >B</text>
<rect x="2" y="432.6" width="636" height="0.7" fill="#c5c2b0"/>
<rect x="2" y="433.3" width="636" height="0.7" fill="#fbfaf5"/>
<rect x="102.8" y="434.5" width="0.7" height="11.5" fill="#b5b2a2"/><rect x="103.5" y="434.5" width="0.6" height="11.5" fill="#fff"/>
<text x="2.1" y="442.6" font-size="7" fill="#000" text-anchor="start" font-weight="normal" textLength="23" lengthAdjust="spacingAndGlyphs" stroke="#000" stroke-width="0.25">Filename:</text>
<text x="105.3" y="442.5" font-size="6.8" fill="#000" text-anchor="start" font-weight="normal" textLength="12.5" lengthAdjust="spacingAndGlyphs" stroke="#000" stroke-width="0.14">CH A</text>
<text x="122" y="442.5" font-size="6.8" fill="#000" text-anchor="start" font-weight="normal" textLength="9.3" lengthAdjust="spacingAndGlyphs" stroke="#000" stroke-width="0.14">dBV</text>
<text x="135.8" y="442.5" font-size="6.8" fill="#000" text-anchor="start" font-weight="normal" textLength="15.2" lengthAdjust="spacingAndGlyphs" stroke="#000" stroke-width="0.14">40kHz</text>
<text x="155.8" y="442.5" font-size="6.8" fill="#000" text-anchor="start" font-weight="normal" textLength="15.1" lengthAdjust="spacingAndGlyphs" stroke="#000" stroke-width="0.14">16384</text>
<text x="175.7" y="442.5" font-size="6.8" fill="#000" text-anchor="start" font-weight="normal" textLength="17.3" lengthAdjust="spacingAndGlyphs" stroke="#000" stroke-width="0.14">2.93Hz</text>
<text x="197.5" y="442.5" font-size="6.8" fill="#000" text-anchor="start" font-weight="normal" textLength="18.5" lengthAdjust="spacingAndGlyphs" stroke="#000" stroke-width="0.14">FlatTop</text>
<text x="220.3" y="442.5" font-size="6.8" fill="#000" text-anchor="start" font-weight="normal" textLength="31.1" lengthAdjust="spacingAndGlyphs" stroke="#000" stroke-width="0.14">1/48 Octave</text>
<path d="M636.5 441 L632 446 M637 443.5 L634.5 446" stroke="#b8b5a5" stroke-width="0.8"/>
<rect x="0" y="446.4" width="640" height="0.7" fill="#f8f8f2"/>
<rect x="0" y="447.1" width="640" height="1.9" fill="#4646b0"/>
<rect x="0" y="449.2" width="640" height="1.8" fill="#f3f2ea"/>
<rect x="0" y="447.6" width="80.5" height="3.4" fill="#4a6cd8"/>
<rect x="1" y="448.6" width="6" height="1.6" fill="#fff"/><rect x="3" y="448.8" width="3" height="1.2" fill="#c03030"/>
<line x1="9" y1="449.4" x2="52" y2="449.4" stroke="#e8eefc" stroke-width="1.2" stroke-dasharray="2 1.2"/>
<rect x="54" y="448.4" width="10" height="2.2" fill="#8aa6ee"/><rect x="66" y="448.4" width="11" height="2.2" fill="#b06a8a"/>
<linearGradient id="pg" x1="0" y1="0" x2="0" y2="1"><stop offset="0" stop-color="#86a4f0"/><stop offset="0.3" stop-color="#7190e4"/><stop offset="0.8" stop-color="#6685de"/><stop offset="1" stop-color="#5070cc"/></linearGradient>
<rect x="234" y="218.2" width="113.8" height="40.9" fill="#6a86dc"/>
<rect x="234" y="218.2" width="113.8" height="10.8" fill="url(#pg)"/>
<rect x="235.4" y="229" width="110" height="28" fill="#ece9d8"/>
<text x="236.1" y="226.5" font-size="7" fill="#f0f3ff" text-anchor="start" font-weight="bold" textLength="21.8" lengthAdjust="spacingAndGlyphs" >Voltage</text>
<rect x="338.5" y="221.3" width="6" height="6" fill="#c8404a" stroke="#f0d0d0" stroke-width="0.5"/>
<path d="M340 222.8 L343 225.8 M343 222.8 L340 225.8" stroke="#fff" stroke-width="1"/>
<clipPath id="pc"><rect x="235.4" y="229" width="110" height="28"/></clipPath>
<text x="236.7" y="252" font-size="25.6" fill="#000" text-anchor="start" font-weight="bold" textLength="108.8" lengthAdjust="spacingAndGlyphs" clip-path="url(#pc)">-1.26 dBV</text>
</svg>
</body></html>
